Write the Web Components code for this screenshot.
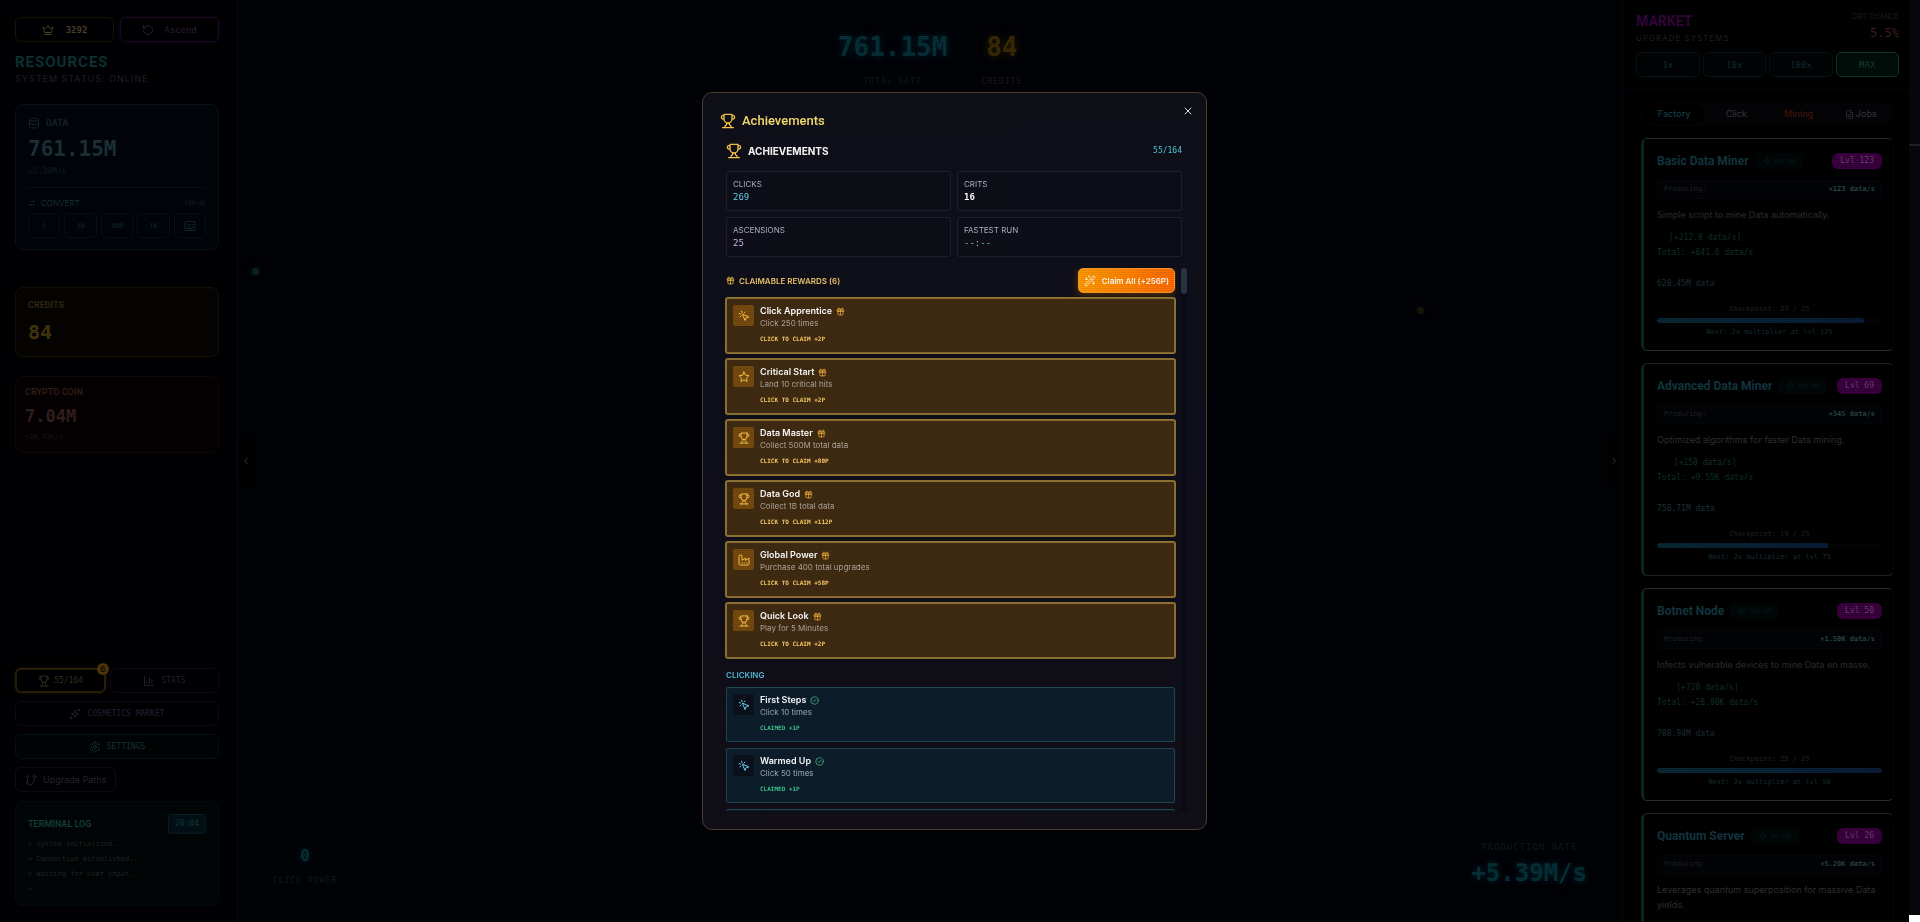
<!DOCTYPE html>
<html lang="en">
<head>
<meta charset="utf-8">
<title>Achievements</title>
<style>
  :root {
    --sans: Inter, "Liberation Sans", sans-serif;
    --mono: "DejaVu Sans Mono", "Liberation Mono", monospace;
    --display: Roboto, "Liberation Sans", sans-serif;
  }

  body {
    margin: 0;
    background: #010206;
    color: #2b2b30;
    font: 8px/12px var(--sans);
    overflow: hidden;
  }
</style>
</head>
<body>
<game-page>
  <resource-panel slot="left"></resource-panel>
  <data-stage slot="main"></data-stage>
  <market-panel slot="right">
    <upgrade-card name="Basic Data Miner" level="123" rate="+123 data/s" bonus="[+212.8 data/s]" total="Total: +641.6 data/s" price="628.45M data" step="23" next="125">Simple script to mine Data automatically.</upgrade-card>
    <upgrade-card name="Advanced Data Miner" level="69" rate="+345 data/s" bonus="[+158 data/s]" total="Total: +9.55K data/s" price="756.71M data" step="19" next="75">Optimized algorithms for faster Data mining.</upgrade-card>
    <upgrade-card name="Botnet Node" level="50" rate="+1.50K data/s" bonus="[+720 data/s]" total="Total: +28.80K data/s" price="708.94M data" step="25" next="50">Infects vulnerable devices to mine Data en masse.</upgrade-card>
    <upgrade-card name="Quantum Server" level="26" rate="+5.20K data/s">Leverages quantum superposition for massive Data yields.</upgrade-card>
  </market-panel>
  <achievements-dialog slot="dialog">
    <achievement-card state="claimable" icon="pointer" name="Click Apprentice" reward="2">Click 250 times</achievement-card>
    <achievement-card state="claimable" icon="star" name="Critical Start" reward="2">Land 10 critical hits</achievement-card>
    <achievement-card state="claimable" icon="trophy" name="Data Master" reward="80">Collect 500M total data</achievement-card>
    <achievement-card state="claimable" icon="trophy" name="Data God" reward="112">Collect 1B total data</achievement-card>
    <achievement-card state="claimable" icon="factory" name="Global Power" reward="58">Purchase 400 total upgrades</achievement-card>
    <achievement-card state="claimable" icon="trophy" name="Quick Look" reward="2">Play for 5 Minutes</achievement-card>
    <achievement-card slot="clicking" icon="pointer" name="First Steps" reward="1">Click 10 times</achievement-card>
    <achievement-card slot="clicking" icon="pointer" name="Warmed Up" reward="1">Click 50 times</achievement-card>
    <achievement-card slot="clicking"></achievement-card>
  </achievements-dialog>
</game-page>

<script>
(function () {
  const ICONS = {
    trophy: '<path d="M6 9H4.5a2.5 2.5 0 0 1 0-5H6M18 9h1.5a2.5 2.5 0 0 0 0-5H18M4 22h16M10 14.66V17c0 .55-.47.98-.97 1.21C7.85 18.75 7 20.24 7 22M14 14.66V17c0 .55.47.98.97 1.21C16.15 18.75 17 20.24 17 22M18 2H6v7a6 6 0 0 0 12 0V2Z"/>',
    crown: '<path d="M11.56 3.27a.5.5 0 0 1 .88 0l2.95 5.6a1 1 0 0 0 1.52.3l4.27-3.67a.5.5 0 0 1 .8.52l-2.83 10.25a1 1 0 0 1-.96.73H5.81a1 1 0 0 1-.96-.73L2.02 6.02a.5.5 0 0 1 .8-.52l4.27 3.67a1 1 0 0 0 1.52-.3zM5 21h14"/>',
    restart: '<path d="M3 12a9 9 0 1 0 9-9 9.75 9.75 0 0 0-6.74 2.74L3 8M3 3v5h5"/>',
    database: '<ellipse cx="12" cy="5" rx="9" ry="3"/><path d="M3 5v14a9 3 0 0 0 18 0V5M3 12a9 3 0 0 0 18 0"/>',
    swap: '<path d="m16 3 4 4-4 4M20 7H4M8 21l-4-4 4-4M4 17h16"/>',
    keypad: '<rect x="2" y="3" width="20" height="18" rx="2"/><path d="M7 9h1M12 9h1M17 9h1M7 13h1M12 13h1M17 13h1M7 17h10"/>',
    gift: '<rect x="3" y="8" width="18" height="4" rx="1"/><path d="M12 8v13M19 12v7a2 2 0 0 1-2 2H7a2 2 0 0 1-2-2v-7M7.5 8a2.5 2.5 0 0 1 0-5A4.8 8 0 0 1 12 8a4.8 8 0 0 1 4.5-5 2.5 2.5 0 0 1 0 5"/>',
    pointer: '<path d="m9 9 5 12 1.8-5.2L21 14ZM7.2 2.2 8 5.1M5.1 8l-2.9-.8M14 4.1 12 6M6 12l-1.9 2"/>',
    star: '<path d="m12 2 3.09 6.26L22 9.27l-5 4.87 1.18 6.88L12 17.77l-6.18 3.25L7 14.14 2 9.27l6.91-1.01Z"/>',
    factory: '<path d="M2 20a2 2 0 0 0 2 2h16a2 2 0 0 0 2-2V8l-7 5V8l-7 5V4a2 2 0 0 0-2-2H4a2 2 0 0 0-2 2ZM17 18h1M12 18h1M7 18h1"/>',
    check: '<circle cx="12" cy="12" r="10"/><path d="m8 12 3 3 5-6"/>',
    wand: '<path d="m21.64 3.64-1.28-1.28a1.21 1.21 0 0 0-1.72 0L2.36 18.64a1.21 1.21 0 0 0 0 1.72l1.28 1.28a1.2 1.2 0 0 0 1.72 0L21.64 5.36a1.2 1.2 0 0 0 0-1.72ZM14 7l3 3M5 6v4M19 14v4M10 2v2M7 8H3M21 16h-4M11 3H9"/>',
    close: '<path d="M18 6 6 18M6 6l12 12"/>',
    chart: '<path d="M3 3v18h18M18 17V9M13 17V5M8 17v-3"/>',
    sparkles: '<path d="M12 5c.8 4.8 2.2 6.2 7 7-4.8.8-6.2 2.2-7 7-.8-4.8-2.2-6.2-7-7 4.8-.8 6.2-2.2 7-7ZM20 2v4M22 4h-4M4 18v4M6 20H2"/>',
    gear: '<path d="M12.22 2h-.44a2 2 0 0 0-2 2v.18a2 2 0 0 1-1 1.73l-.43.25a2 2 0 0 1-2 0l-.15-.08a2 2 0 0 0-2.73.73l-.22.38a2 2 0 0 0 .73 2.73l.15.1a2 2 0 0 1 1 1.72v.51a2 2 0 0 1-1 1.74l-.15.09a2 2 0 0 0-.73 2.73l.22.38a2 2 0 0 0 2.73.73l.15-.08a2 2 0 0 1 2 0l.43.25a2 2 0 0 1 1 1.73V20a2 2 0 0 0 2 2h.44a2 2 0 0 0 2-2v-.18a2 2 0 0 1 1-1.73l.43-.25a2 2 0 0 1 2 0l.15.08a2 2 0 0 0 2.73-.73l.22-.39a2 2 0 0 0-.73-2.73l-.15-.08a2 2 0 0 1-1-1.74v-.5a2 2 0 0 1 1-1.74l.15-.09a2 2 0 0 0 .73-2.73l-.22-.38a2 2 0 0 0-2.73-.73l-.15.08a2 2 0 0 1-2 0l-.43-.25a2 2 0 0 1-1-1.73V4a2 2 0 0 0-2-2z"/><circle cx="12" cy="12" r="3"/>',
    branch: '<circle cx="5" cy="5" r="2"/><circle cx="19" cy="5" r="3"/><path d="M5 7v12a3 3 0 0 0 3 3h1c7 0 10-6 10-14M2 16l3 3"/>',
    file: '<path d="M15 2H6a2 2 0 0 0-2 2v16a2 2 0 0 0 2 2h12a2 2 0 0 0 2-2V7ZM14 2v6h6M8 13h8M8 17h8"/>',
    zap: '<path d="M13 2 3 14h9l-1 8 10-12h-9Z"/>',
    left: '<path d="m15 18-6-6 6-6"/>',
    right: '<path d="m9 18 6-6-6-6"/>'
  };

  // Attach an open shadow root and fill it from a template
  function render(host, html) {
    const tmpl = document.createElement('template');
    tmpl.innerHTML = html;
    host.attachShadow({ mode: 'open' }).appendChild(tmpl.content.cloneNode(true));
  }

  class HudIcon extends HTMLElement {
    constructor() {
      super();
      this.attachShadow({ mode: 'open' });
    }

    connectedCallback() {
      const size = this.getAttribute('size') || 12;
      this.shadowRoot.innerHTML = `
        <style>
          :host { display: inline-flex; flex: none; }
          svg { display: block; fill: none; stroke: currentColor; stroke-width: 2; stroke-linecap: round; stroke-linejoin: round; }
        </style>
        <svg width="${size}" height="${size}" viewBox="0 0 24 24" aria-hidden="true">${ICONS[this.getAttribute('name')] || ''}</svg>`;
    }
  }

  class GamePage extends HTMLElement {
    constructor() {
      super();
      render(this, `
        <style>
          :host {
            display: grid;
            grid-template-columns: 238px 1fr 287px 11px;
            height: 100vh;
          }
          ::slotted(*) { min-height: 0; }
          .rail {
            display: flex;
            flex-direction: column;
            justify-content: space-between;
            background: #07060c;
          }
          .rail i { height: 2px; margin-top: 144px; background: #1f1e24; }
          .rail b { height: 7px; background: #fff; }
          .scanlines {
            position: fixed;
            inset: 0 11px 0 0;
            pointer-events: none;
            background: repeating-linear-gradient(rgba(0, 0, 0, 0) 0 1px, rgba(0, 0, 0, .2) 1px 2px);
          }
        </style>
        <slot name="left"></slot>
        <slot name="main"></slot>
        <slot name="right"></slot>
        <div class="rail"><i></i><b></b></div>
        <div class="scanlines"></div>
        <slot name="dialog"></slot>
      `);
    }
  }

  class ResourcePanel extends HTMLElement {
    constructor() {
      super();
      render(this, `
        <style>
          :host {
            display: flex;
            flex-direction: column;
            box-sizing: border-box;
            padding: 17px 18px 16px 15px;
            background: #010103;
            border-right: 1px solid #0a0812;
          }
          h2, h3, p { margin: 0; }
          button {
            display: flex;
            align-items: center;
            justify-content: center;
            box-sizing: border-box;
            height: 25px;
            padding: 0;
            border: 1px solid;
            border-radius: 6px;
            background: none;
            font: 9px/12px var(--mono);
          }
          .row { display: grid; grid-template-columns: 1fr 1fr; gap: 6px; }
          .points { gap: 12px; border-color: #1a1506; color: #494128; font-weight: bold; }
          .ascend { gap: 10px; border-color: #1e0b2c; color: #2f1d3a; box-shadow: 0 0 5px #170722; }
          h2 { margin-top: 10px; font: bold 15px/20px var(--display); letter-spacing: 1px; color: #0e3536; }
          .status { margin-bottom: 18px; font-size: 9px; line-height: 14px; letter-spacing: 1px; color: #232327; }
          .card { box-sizing: border-box; padding: 11px 12px; border: 1px solid; border-radius: 8px; }
          .card h3 { display: flex; gap: 6px; align-items: center; font: bold 9px/12px var(--display); }
          .value { font: bold 21px/26px var(--mono); }
          .rate { font: 8px/12px var(--mono); }

          .data { padding-top: 12px; border-color: #07131a; background: #01050a; color: #14262b; }
          .data .value { margin-top: 7px; color: #1d343a; }
          .data .rate { margin-top: 4px; padding-bottom: 9px; border-bottom: 1px solid #07141a; color: #142023; }
          .convert { display: flex; align-items: center; gap: 5px; margin-top: 9px; font-size: 8px; color: #18313a; }
          .convert small { margin-left: auto; font: 6px/12px var(--mono); color: #1a2226; }
          .amounts { display: grid; grid-template-columns: repeat(5, 1fr); gap: 4px; margin-top: 4px; }
          .amounts button { font-size: 7px; border-color: #06121a; border-radius: 5px; color: #122b33; }

          .credits { margin-top: 37px; border-color: #171203; background: #050402; color: #332a13; }
          .credits .value { margin-top: 8px; font-size: 20px; color: #47390f; }
          .crypto { margin-top: 19px; padding: 9px; border-color: #130607; background: #050102; color: #331d19; }
          .crypto .value { margin-top: 8px; font-size: 17px; line-height: 20px; color: #35211f; }
          .crypto .rate { margin-top: 5px; font-size: 7px; color: #201416; }

          nav { display: flex; flex-direction: column; gap: 8px; margin-top: auto; }
          nav .row { grid-template-columns: 5fr 6fr; gap: 4px; }
          nav button { gap: 6px; }
          .count { position: relative; border: 2px solid #2e2009; color: #393322; box-shadow: 0 0 4px #1a1204; font-size: 8px; gap: 4px; }
          .count span {
            position: absolute;
            top: -7px;
            right: -5px;
            width: 12px;
            border-radius: 6px;
            background: #543908;
            color: #120d02;
            font: bold 8px/12px var(--sans);
          }
          .stats { border-color: #12071a; color: #2b2030; font-size: 8px; }
          .market { border-color: #12081b; color: #2d203b; font-size: 8px; }
          .settings { border-color: #051113; color: #173436; background: #010405; font-size: 8px; }
          .paths { align-self: flex-start; padding: 0 9px; border-color: #0e0c18; color: #27252f; font: 9px/12px var(--sans); }

          .log { margin-top: 9px; padding: 12px 12px 8px; border-color: #041010; background: #010506; }
          .log header { display: flex; align-items: center; justify-content: space-between; margin-bottom: 3px; }
          .log h3 { color: #144039; }
          time { padding: 2px 6px; border: 1px solid #061e25; border-radius: 3px; background: #031116; font: 8px/14px var(--mono); color: #123a42; }
          .log p { font: 7px/15px var(--mono); color: #222829; }
        </style>
        <div class="row">
          <button class="points"><hud-icon name="crown" size="12"></hud-icon>3292</button>
          <button class="ascend"><hud-icon name="restart" size="12"></hud-icon>Ascend</button>
        </div>
        <h2>RESOURCES</h2>
        <p class="status">SYSTEM STATUS: ONLINE</p>

        <section class="card data">
          <h3><hud-icon name="database" size="12"></hud-icon>DATA</h3>
          <div class="value">761.15M</div>
          <div class="rate">+5.39M/s</div>
          <div class="convert"><hud-icon name="swap" size="8"></hud-icon>CONVERT<small>100→1K</small></div>
          <div class="amounts">
            <button>1</button><button>10</button><button>100</button><button>1K</button>
            <button aria-label="Custom amount"><hud-icon name="keypad" size="12"></hud-icon></button>
          </div>
        </section>

        <section class="card credits">
          <h3>CREDITS</h3>
          <div class="value">84</div>
        </section>

        <section class="card crypto">
          <h3>CRYPTO COIN</h3>
          <div class="value">7.04M</div>
          <div class="rate">+20.73K/s</div>
        </section>

        <nav>
          <div class="row">
            <button class="count"><hud-icon name="trophy" size="12"></hud-icon>55/164<span>6</span></button>
            <button class="stats"><hud-icon name="chart" size="12"></hud-icon>STATS</button>
          </div>
          <button class="market"><hud-icon name="sparkles" size="12"></hud-icon>COSMETICS MARKET</button>
          <button class="settings"><hud-icon name="gear" size="12"></hud-icon>SETTINGS</button>
          <button class="paths"><hud-icon name="branch" size="12"></hud-icon>Upgrade Paths</button>
        </nav>

        <section class="card log">
          <header><h3>TERMINAL LOG</h3><time>20:04</time></header>
          <p>&gt; System initialized...</p>
          <p>&gt; Connection established...</p>
          <p>&gt; Waiting for user input...</p>
          <p>&gt; _</p>
        </section>
      `);
    }
  }

  class DataStage extends HTMLElement {
    constructor() {
      super();
      render(this, `
        <style>
          :host {
            position: relative;
            display: flex;
            flex-direction: column;
            justify-content: space-between;
            box-sizing: border-box;
            padding: 32px 35px 35px;
            background: radial-gradient(circle, #020308, #010206);
            text-align: center;
            font-family: var(--mono);
          }
          .totals { display: flex; justify-content: center; gap: 34px; }
          .totals b { display: block; margin-bottom: 14px; font-size: 26px; line-height: 30px; color: #06323c; text-shadow: 0 0 8px #042a33; }
          .totals .gold { color: #3c2c06; text-shadow: 0 0 8px #2c2004; }
          .label { letter-spacing: 1px; color: #15191d; }
          .gold + .label { color: #1e1b14; }
          .bottom { display: flex; justify-content: space-between; align-items: flex-end; }
          .bottom b { display: block; color: #05323a; text-shadow: 0 0 6px #042a33; }
          .power b { margin-bottom: 9px; font-size: 16px; line-height: 20px; }
          .rate b { margin-top: 5px; font-size: 24px; line-height: 28px; }
          .rate .label { font-size: 9px; }
          /* panel handles lie over the edges of the stage */
          button {
            position: absolute;
            top: calc(50% - 25px);
            display: flex;
            align-items: center;
            justify-content: center;
            width: 16px;
            height: 50px;
            padding: 0;
            border: 0;
            background: #010102;
            color: #3a3a3e;
          }
          .prev { left: 0; border-radius: 0 6px 6px 0; }
          .next { right: 0; border-radius: 6px 0 0 6px; }
          i { position: absolute; width: 7px; height: 7px; border-radius: 50%; }
          .cyan { left: 14px; top: 268px; background: #0a2424; box-shadow: 0 0 6px #051414; }
          .lime { right: 198px; top: 307px; background: #161907; box-shadow: 0 0 6px #0a0c04; }
        </style>
        <div class="totals">
          <div><b>761.15M</b><span class="label">TOTAL DATA</span></div>
          <div><b class="gold">84</b><span class="label">CREDITS</span></div>
        </div>
        <i class="cyan"></i><i class="lime"></i>
        <button class="prev" aria-label="Hide resources"><hud-icon name="left" size="12"></hud-icon></button>
        <button class="next" aria-label="Hide market"><hud-icon name="right" size="12"></hud-icon></button>
        <div class="bottom">
          <div class="power"><b>0</b><span class="label">CLICK POWER</span></div>
          <div class="rate"><span class="label">PRODUCTION RATE</span><b>+5.39M/s</b></div>
        </div>
      `);
    }
  }

  class MarketPanel extends HTMLElement {
    constructor() {
      super();
      render(this, `
        <style>
          :host {
            display: block;
            box-sizing: border-box;
            overflow: hidden;
            background: #010102;
            border-left: 1px solid #07090d;
          }
          header { padding: 11px 10px 12px 13px; border-bottom: 1px solid #08080b; }
          .top { display: flex; justify-content: space-between; margin-bottom: 7px; }
          h2 { margin: 0; font: bold 14px/20px var(--display); color: #370540; }
          .sub { letter-spacing: 1px; line-height: 14px; color: #202024; }
          .crit { text-align: right; font-size: 7px; color: #1f1f23; }
          .crit b { display: block; font: 12px/20px var(--mono); color: #40201c; }
          .buy { display: grid; grid-template-columns: repeat(4, 1fr); gap: 3px; }
          .buy button { height: 25px; padding: 0; border: 1px solid #061318; border-radius: 5px; background: #010304; color: #123036; font: 9px/12px var(--mono); }
          .buy .on { border-color: #10351f; background: #020e0a; color: #1c4031; }
          .list { display: flex; flex-direction: column; gap: 12px; padding: 12px 15px 0 18px; }
          .tabs { display: grid; grid-template-columns: repeat(4, 1fr); padding: 2px; border-radius: 12px; background: #040407; }
          .tabs button { display: flex; align-items: center; justify-content: center; gap: 2px; height: 20px; padding: 0; border: 0; border-radius: 10px; background: none; color: #35353a; font: 500 9px/12px var(--sans); }
          .tabs .on { background: #000001; color: #163f47; }
          .tabs .hot { color: #451508; }
        </style>
        <header>
          <div class="top">
            <div><h2>MARKET</h2><div class="sub">UPGRADE SYSTEMS</div></div>
            <div class="crit">CRIT CHANCE<b>5.5%</b></div>
          </div>
          <div class="buy">
            <button>1x</button><button>10x</button><button>100x</button><button class="on">MAX</button>
          </div>
        </header>
        <div class="list">
          <div class="tabs">
            <button class="on">Factory</button><button>Click</button><button class="hot">Mining</button>
            <button><hud-icon name="file" size="9"></hud-icon>Jobs</button>
          </div>
          <slot></slot>
        </div>
      `);
    }
  }

  class UpgradeCard extends HTMLElement {
    constructor() {
      super();
      const get = (name) => this.getAttribute(name) || '';
      const details = !get('price') ? '' : `
        <div class="gain">${get('bonus')}<br>${get('total')}</div>
        <div class="price">${get('price')}</div>
        <div class="step">Checkpoint: ${get('step')} / 25</div>
        <div class="bar"><i style="width: ${get('step') * 4}%"></i></div>
        <div class="step next">Next: 2x multiplier at lvl ${get('next')}</div>`;

      render(this, `
        <style>
          :host {
            display: block;
            box-sizing: border-box;
            min-height: 213px;
            padding: 14px 11px 12px 13px;
            border: 1px solid #2b2b2e;
            border-left: 3px solid #0c2825;
            border-right-color: #070709;
            border-radius: 6px;
          }
          .head { display: flex; align-items: center; gap: 6px; }
          h3 { margin: 0; font: bold 12px/16px var(--display); color: #143943; }
          .online { display: flex; align-items: center; gap: 3px; padding: 0 7px; background: #010607; border-radius: 4px; font: 6px/16px var(--mono); color: #071d18; }
          .level { margin-left: auto; padding: 0 8px; border-radius: 6px; background: #3c0043; font: 8px/16px var(--mono); color: #6a4a6c; }
          .producing { display: flex; justify-content: space-between; margin-top: 11px; padding: 0 6px; border: 1px solid #06070b; border-radius: 3px; background: #020307; font: 7px/17px var(--mono); color: #25252a; }
          .producing b { color: #2a4947; }
          p { margin: 8px 0 0; font-size: 9px; line-height: 15px; color: #313135; }
          .gain { display: inline-block; margin-top: 8px; text-align: center; font: 8px/15px var(--mono); color: #12332b; }
          .price { margin-top: 9px; padding-top: 8px; border-top: 1px solid #060607; font: 8px/12px var(--mono); color: #1d3335; }
          .step { margin-top: 13px; text-align: center; font: 7px/12px var(--mono); color: #252529; }
          .next { margin-top: 3px; color: #1a3036; }
          .bar { height: 5px; margin-top: 3px; border-radius: 3px; background: #040406; overflow: hidden; }
          .bar i { display: block; height: 100%; border-radius: 3px; background: linear-gradient(90deg, #082b35, #0a1d3a); }
        </style>
        <div class="head">
          <h3>${get('name')}</h3>
          <span class="online"><hud-icon name="zap" size="10"></hud-icon>ONLINE</span>
          <span class="level">Lvl ${get('level')}</span>
        </div>
        <div class="producing">Producing:<b>${get('rate')}</b></div>
        <p><slot></slot></p>
        ${details}
      `);
    }
  }

  class AchievementsDialog extends HTMLElement {
    constructor() {
      super();
      render(this, `
        <style>
          :host {
            position: fixed;
            inset: 0 11px 0 0;
            display: flex;
            align-items: center;
            justify-content: center;
          }
          .dialog {
            position: relative;
            display: flex;
            flex-direction: column;
            box-sizing: border-box;
            width: 505px;
            max-width: 95%;
            height: 80vh;
            padding: 17px 19px 18px 23px;
            border: 1px solid #4c3e2e;
            border-radius: 10px;
            background: linear-gradient(#0f0f19, #0f0f1b 50%, #110e17);
          }
          .dialog::after {
            content: "";
            position: absolute;
            inset: 0;
            pointer-events: none;
            background: repeating-linear-gradient(rgba(0, 0, 0, 0) 0 1px, rgba(0, 0, 0, .08) 1px 2px);
          }
          h2, h3, h4 { display: flex; align-items: center; margin: 0; }
          h2 { gap: 6px; margin-left: -6px; font: 500 13px/22px var(--display); color: #f8e070; }
          h3 { gap: 6px; font: bold 10px/14px var(--sans); color: #fff; }
          hud-icon { color: #fbc94a; }
          .close {
            position: absolute;
            top: 12px;
            right: 12px;
            padding: 0;
            border: 0;
            background: none;
          }
          .close hud-icon { color: #e8e8ec; }
          .title { display: flex; justify-content: space-between; align-items: center; margin: 11px 5px 12px 0; }
          .title span { font: 8px/12px var(--mono); color: #4fd0e0; }
          dl { display: grid; grid-template-columns: 1fr 1fr; gap: 6px; margin: 0 5px 11px 0; }
          dl div { box-sizing: border-box; height: 40px; padding: 6px; border: 1px solid #1f202b; border-radius: 2px; background: #0d0e17; }
          dt { line-height: 13px; color: #b4b4c0; }
          dd { margin: 0; font: 9px/13px var(--mono); color: #66cdee; }
          .crits { color: #fff; font-weight: bold; }
          .asc { color: #cbb6f2; }
          .run { color: #7cc7b8; }
          .scroll { display: flex; gap: 5px; flex: 1; min-height: 0; margin-left: -4px; }
          .list { flex: 1; overflow: hidden; padding-left: 4px; padding-right: 1px; }
          .rail { width: 6px; background: #0a0b16; }
          .rail i { display: block; height: 26px; border-radius: 3px; background: #2a3346; }
          .group { display: flex; flex-direction: column; gap: 6px; }
          .bar { display: flex; align-items: center; justify-content: space-between; margin-bottom: 5px; }
          h4 { gap: 4px; font: 600 8px/12px var(--sans); color: #f0c46a; }
          .clicking { margin: 11px 0 6px; color: #55bcd6; }
          .all {
            display: flex;
            align-items: center;
            gap: 6px;
            height: 25px;
            padding: 0 5px;
            border: 1px solid #ff9d2e;
            border-radius: 5px;
            background: linear-gradient(90deg, #ff9a00, #ff6a00);
            box-shadow: 0 2px 8px #5a3206;
            color: #fffaf0;
            font: 600 8px/12px var(--sans);
          }
          .all hud-icon { color: #fff0cf; }
        </style>
        <div class="dialog" role="dialog" aria-label="Achievements">
          <h2><hud-icon name="trophy" size="16"></hud-icon>Achievements</h2>
          <button class="close" aria-label="Close"><hud-icon name="close" size="12"></hud-icon></button>
          <div class="title">
            <h3><hud-icon name="trophy" size="16"></hud-icon>ACHIEVEMENTS</h3>
            <span>55/164</span>
          </div>
          <dl>
            <div><dt>CLICKS</dt><dd>269</dd></div>
            <div><dt>CRITS</dt><dd class="crits">16</dd></div>
            <div><dt>ASCENSIONS</dt><dd class="asc">25</dd></div>
            <div><dt>FASTEST RUN</dt><dd class="run">--:--</dd></div>
          </dl>
          <div class="scroll">
            <div class="list">
              <div class="bar">
                <h4><hud-icon name="gift" size="9"></hud-icon>CLAIMABLE REWARDS (6)</h4>
                <button class="all"><hud-icon name="wand" size="12"></hud-icon>Claim All (+256P)</button>
              </div>
              <div class="group"><slot></slot></div>
              <h4 class="clicking">CLICKING</h4>
              <div class="group"><slot name="clicking"></slot></div>
            </div>
            <div class="rail"><i></i></div>
          </div>
        </div>
      `);
    }
  }

  class AchievementCard extends HTMLElement {
    constructor() {
      super();
      const name = this.getAttribute('name');
      const claimable = this.getAttribute('state') === 'claimable';
      const body = !name ? '' : `
        <span class="tile"><hud-icon name="${this.getAttribute('icon')}" size="12"></hud-icon></span>
        <div>
          <h5>${name}<hud-icon name="${claimable ? 'gift' : 'check'}" size="9"></hud-icon></h5>
          <div class="text"><slot></slot></div>
          <div class="reward">${claimable ? 'CLICK TO CLAIM' : 'CLAIMED'} +${this.getAttribute('reward')}P</div>
        </div>`;

      render(this, `
        <style>
          :host {
            display: flex;
            gap: 6px;
            box-sizing: border-box;
            min-height: 55px;
            padding: 6px 6px 7px;
            border: 1px solid #1f4855;
            border-radius: 2px;
            background: #0d1d2b;
            color: #9dabba;
          }
          :host([state='claimable']) {
            border-color: #8f7030;
            box-shadow: 0 0 0 1px #917636;
            background: #402b12;
            color: #b0a79b;
          }
          .tile { display: flex; align-items: center; justify-content: center; width: 21px; height: 21px; border-radius: 2px; background: #0b101c; color: #6ad6f4; }
          :host([state='claimable']) .tile { background: #754a0e; color: #ffc04a; }
          h5 { display: flex; align-items: center; gap: 4px; margin: 0; font: 600 9px/12px var(--sans); color: #fff; }
          h5 hud-icon { color: #45bd87; }
          :host([state='claimable']) h5 hud-icon { color: #f5b43c; }
          .reward { margin-top: 4px; font: bold 6px/12px var(--mono); color: #3cc790; }
          :host([state='claimable']) .reward { color: #ffd067; }
        </style>
        ${body}
      `);
    }
  }

  window.customElements.define('hud-icon', HudIcon);
  window.customElements.define('game-page', GamePage);
  window.customElements.define('resource-panel', ResourcePanel);
  window.customElements.define('data-stage', DataStage);
  window.customElements.define('market-panel', MarketPanel);
  window.customElements.define('upgrade-card', UpgradeCard);
  window.customElements.define('achievements-dialog', AchievementsDialog);
  window.customElements.define('achievement-card', AchievementCard);
})();
</script>
</body>
</html>
